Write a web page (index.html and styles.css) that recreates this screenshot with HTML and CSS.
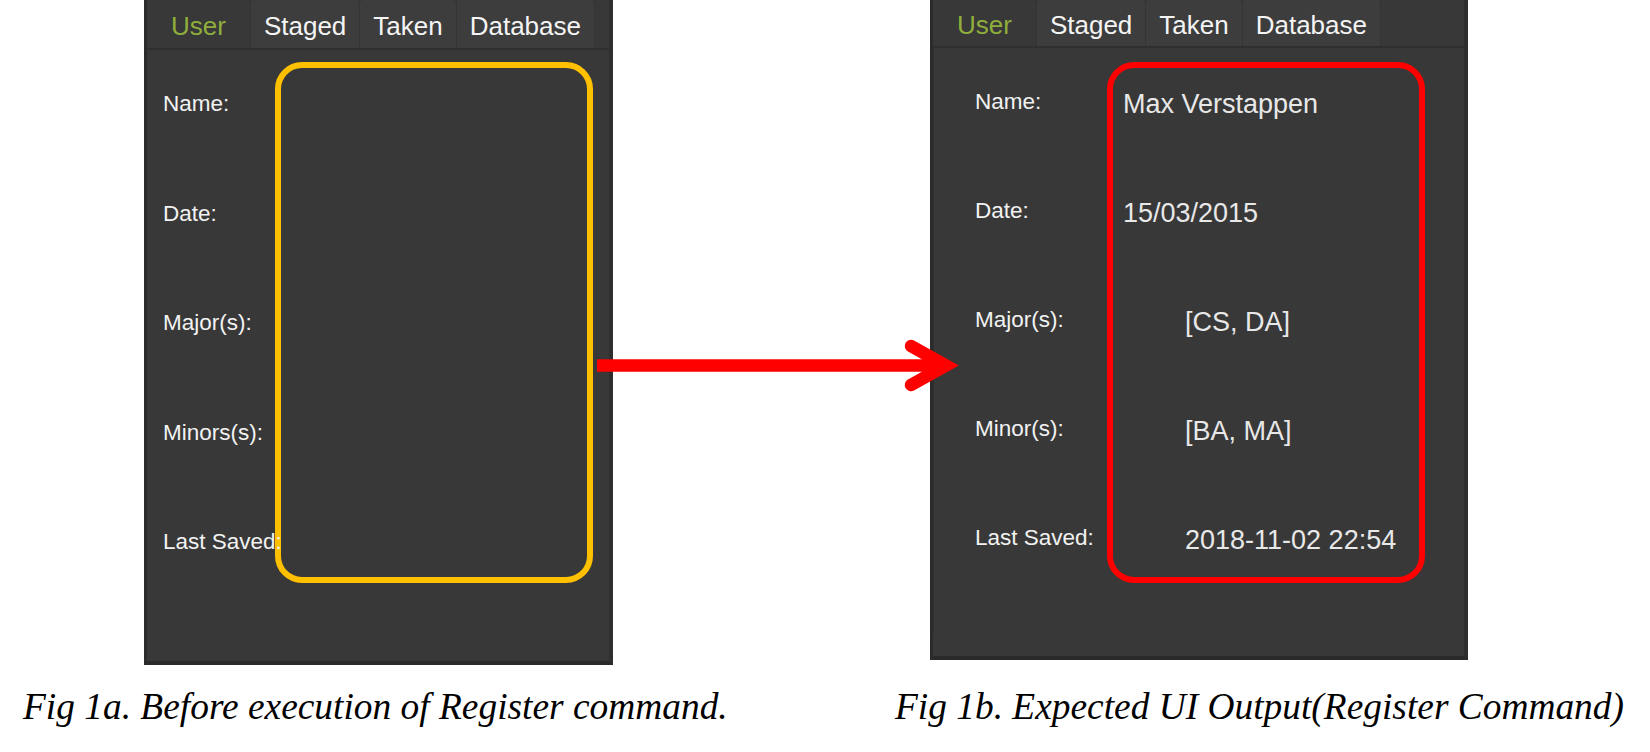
FILE: index.html
```html
<!DOCTYPE html>
<html lang="en">
<head>
<meta charset="utf-8">
<title>Register command UI</title>
<link rel="stylesheet" href="styles.css">
</head>
<body>
<main class="page">
  <section class="panels">
    <div class="panel panel-a">
      <nav class="tabs">
        <span class="tab active">User</span>
        <span class="tab">Staged</span>
        <span class="tab">Taken</span>
        <span class="tab">Database</span>
      </nav>
      <div class="highlight highlight-orange"></div>
      <div class="content">
        <div class="fields fields-a">
          <div class="label">Name:</div><div class="value"></div>
          <div class="label">Date:</div><div class="value"></div>
          <div class="label">Major(s):</div><div class="value"></div>
          <div class="label">Minors(s):</div><div class="value"></div>
          <div class="label">Last Saved:</div><div class="value"></div>
        </div>
      </div>
    </div>

    <div class="panel panel-b">
      <nav class="tabs">
        <span class="tab active">User</span>
        <span class="tab">Staged</span>
        <span class="tab">Taken</span>
        <span class="tab">Database</span>
      </nav>
      <div class="highlight highlight-red"></div>
      <div class="content">
        <div class="fields fields-b">
          <div class="label">Name:</div><div class="value">Max Verstappen</div>
          <div class="label">Date:</div><div class="value">15/03/2015</div>
          <div class="label">Major(s):</div><div class="value indent">[CS, DA]</div>
          <div class="label">Minor(s):</div><div class="value indent">[BA, MA]</div>
          <div class="label">Last Saved:</div><div class="value indent">2018-11-02 22:54</div>
        </div>
      </div>
    </div>
  </section>

  <section class="captions">
    <p class="caption">Fig 1a. Before execution of Register command.</p>
    <p class="caption">Fig 1b. Expected UI Output(Register Command)</p>
  </section>

  <svg class="arrow" width="380" height="80" viewBox="590 325 380 80" aria-hidden="true">
    <line x1="597" y1="365.5" x2="947" y2="365.5" stroke="#ff0000" stroke-width="12.5"/>
    <polyline points="911,346 946,365.5 911,385" fill="none" stroke="#ff0000" stroke-width="12.5" stroke-linecap="round" stroke-linejoin="miter" stroke-miterlimit="10"/>
  </svg>
</main>
</body>
</html>
```

FILE: styles.css
```css
html, body {
  margin: 0;
  padding: 0;
  background: #ffffff;
}

.page {
  position: relative;
  width: 1650px;
  height: 752px;
  overflow: hidden;
}

.panels {
  display: flex;
  align-items: flex-start;
}

.panel {
  position: relative;
  box-sizing: border-box;
  background: #383838;
  border-left: 3px solid #2b2b2b;
  border-right: 4px solid #2e2e2e;
  border-bottom: 4px solid #2a2a2a;
  font-family: "Liberation Sans", Arial, sans-serif;
}

.panel-a {
  margin-left: 144px;
  width: 469px;
  height: 665px;
}

.panel-b {
  margin-left: 317px;
  width: 538px;
  height: 660px;
}

.tabs {
  display: flex;
  box-sizing: border-box;
  border-bottom: 2px solid #2f2f2f;
}

.panel-a .tabs { height: 50px; }
.panel-b .tabs { height: 48px; }

.tab {
  display: flex;
  align-items: center;
  box-sizing: border-box;
  padding: 5px 13px 0;
  font-size: 26px;
  color: #f4f4f4;
  background: #3d3d3d;
  border-right: 1px solid #343434;
  border-radius: 4px 4px 0 0;
}

.tab.active {
  padding: 5px 24px 0;
  background: transparent;
  color: #8fae3c;
}

.content {
  position: relative;
  box-sizing: border-box;
}

.panel-b .content {
  border-left: 1px solid #303030;
}

.fields {
  display: grid;
  grid-template-columns: 148px 1fr;
  align-items: start;
}

.fields-a {
  padding: 41px 0 0 16px;
  grid-auto-rows: 109.5px;
}

.fields-b {
  padding: 41px 0 0 41px;
  grid-auto-rows: 109px;
}

.label {
  font-size: 22.5px;
  line-height: 26px;
  color: #f2f2f2;
  white-space: nowrap;
}

.value {
  font-size: 27px;
  line-height: 30px;
  color: #e8e8e8;
  white-space: nowrap;
}

.value.indent {
  padding-left: 62px;
}

.highlight {
  position: absolute;
  top: 62px;
  width: 318px;
  height: 521px;
  box-sizing: border-box;
  border: 6px solid;
  border-radius: 27px;
}

.highlight-orange {
  left: 128px;
  border-color: #ffc000;
}

.highlight-red {
  left: 174px;
  border-color: #ff0000;
}

.captions {
  display: grid;
  grid-template-columns: 872px auto;
  padding-left: 23px;
  margin-top: 20px;
}

.caption {
  margin: 0;
  font-family: "Liberation Serif", "Times New Roman", serif;
  font-style: italic;
  font-size: 37.4px;
  line-height: 44px;
  color: #000000;
  white-space: nowrap;
}

.arrow {
  position: absolute;
  left: 590px;
  top: 325px;
  overflow: visible;
}
```
